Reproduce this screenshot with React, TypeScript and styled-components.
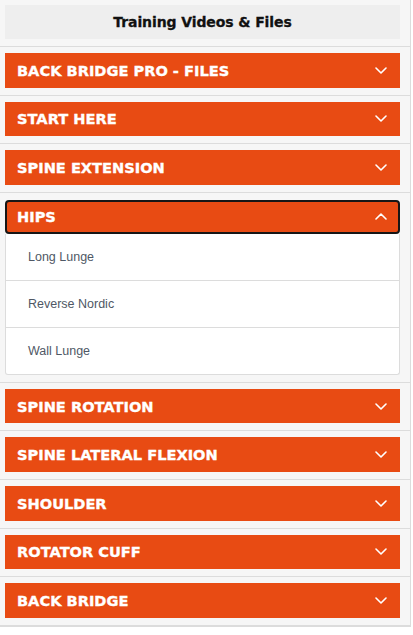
import React, { useState } from "react";
import styled, { createGlobalStyle } from "styled-components";

const Global = createGlobalStyle`
  html, body { margin: 0; padding: 0; background: #ffffff; }
  * { box-sizing: border-box; }
`;

const Panel = styled.div`
  width: 411px;
  background: #f6f6f6;
  border-right: 1px solid #dcdcdc;
  border-bottom: 1px solid #dcdcdc;
  display: flex;
  flex-direction: column;
`;

const HeaderItem = styled.div`
  padding: 5px 10px 7px 5px;
  border-bottom: 1px solid #dcdcdc;
`;

const HeaderBox = styled.div`
  height: 34px;
  background: #eeeeee;
  display: flex;
  align-items: center;
  justify-content: center;
  font-family: "DejaVu Sans", "Liberation Sans", sans-serif;
  font-weight: 700;
  font-size: 14px;
  letter-spacing: -0.1px;
  color: #111111;
  -webkit-text-stroke: 0.3px #111111;
`;

const Section = styled.div<{ $open: boolean }>`
  padding: ${(p) => (p.$open ? "7px" : "6px")} 10px 7px 5px;
  border-bottom: 1px solid #dcdcdc;
`;

const Toggle = styled.button<{ $open: boolean }>`
  width: 100%;
  height: ${(p) => (p.$open ? "34px" : "34.6px")};
  background: #e84b13;
  border: 2px solid ${(p) => (p.$open ? "#161616" : "#e84b13")};
  border-radius: ${(p) => (p.$open ? "4px" : "0")};
  padding: 0 11px 0 10px;
  display: flex;
  align-items: center;
  justify-content: space-between;
  cursor: pointer;
  color: #ffffff;
  font-family: "DejaVu Sans", "Liberation Sans", sans-serif;
  font-weight: 700;
  font-size: 14.6px;
  letter-spacing: 0;
  -webkit-text-stroke: 0.35px #ffffff;
  text-transform: uppercase;
  text-align: left;
`;

const Chevron = styled.svg<{ $open: boolean }>`
  width: 12px;
  height: 7px;
  flex: none;
  transform: ${(p) => (p.$open ? "rotate(180deg)" : "none")};
`;

const Content = styled.div`
  background: #ffffff;
  border: 1px solid #dcdcdc;
  border-top: none;
  border-radius: 0 0 3px 3px;
  display: flex;
  flex-direction: column;
`;

const Row = styled.div`
  height: 47px;
  padding-left: 22px;
  display: flex;
  align-items: center;
  font-family: "Liberation Sans", Arial, sans-serif;
  font-size: 12.5px;
  color: #4f5865;
  border-bottom: 1px solid #dcdcdc;
  &:last-child {
    border-bottom: none;
    height: 46px;
  }
`;

const sections: { title: string; items: string[] }[] = [
  { title: "Back Bridge Pro - Files", items: [] },
  { title: "Start Here", items: [] },
  { title: "Spine Extension", items: [] },
  { title: "Hips", items: ["Long Lunge", "Reverse Nordic", "Wall Lunge"] },
  { title: "Spine Rotation", items: [] },
  { title: "Spine Lateral Flexion", items: [] },
  { title: "Shoulder", items: [] },
  { title: "Rotator Cuff", items: [] },
  { title: "Back Bridge", items: [] },
];

export default function App() {
  const [open, setOpen] = useState<number>(3);
  return (
    <>
      <Global />
      <Panel>
        <HeaderItem>
          <HeaderBox>Training Videos &amp; Files</HeaderBox>
        </HeaderItem>
        {sections.map((s, i) => {
          const isOpen = open === i;
          return (
            <Section key={s.title} $open={isOpen}>
              <Toggle $open={isOpen} onClick={() => setOpen(isOpen ? -1 : i)}>
                <span>{s.title}</span>
                <Chevron $open={isOpen} viewBox="0 0 12 7" fill="none">
                  <polyline
                    points="1,1 6,6 11,1"
                    stroke="#ffffff"
                    strokeWidth="1.6"
                    strokeLinecap="round"
                    strokeLinejoin="round"
                  />
                </Chevron>
              </Toggle>
              {isOpen && s.items.length > 0 && (
                <Content>
                  {s.items.map((it) => (
                    <Row key={it}>{it}</Row>
                  ))}
                </Content>
              )}
            </Section>
          );
        })}
      </Panel>
    </>
  );
}
